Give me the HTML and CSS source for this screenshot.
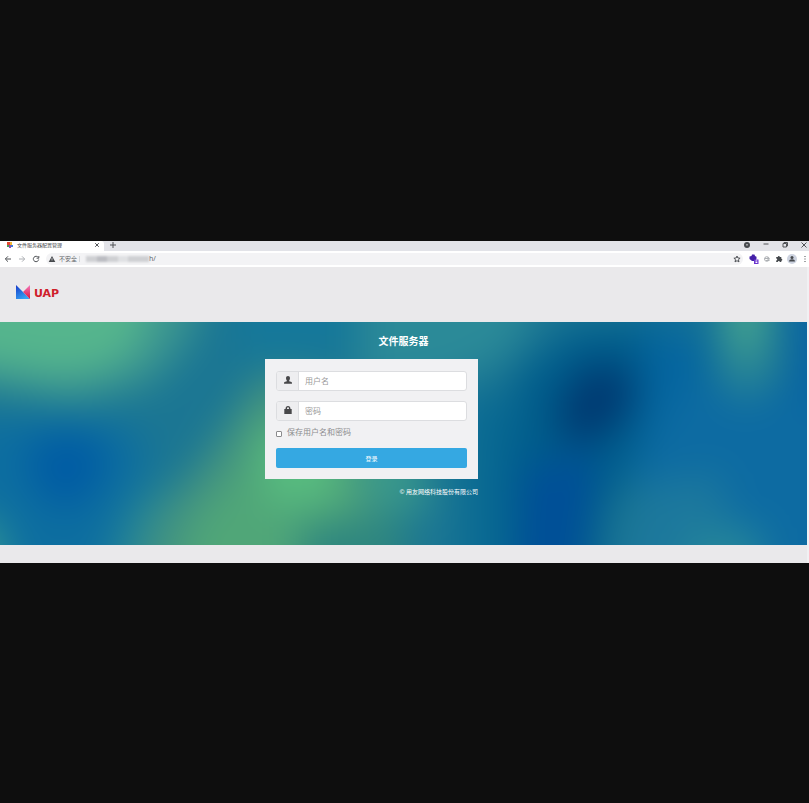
FILE: index.html
```html
<!DOCTYPE html>
<html>
<head>
<meta charset="utf-8">
<title>文件服务器配置管理</title>
<link rel="stylesheet" href="styles.css">
</head>
<body>
<div class="browser">
  <div class="tabs">
    <div class="tab">
      <svg class="favicon" viewBox="0 0 6 6"><path fill="#e5482f" d="M0 0h3v3H0z"/><path fill="#f2b632" d="M3 0h2v3H3z"/><path fill="#4b9c58" d="M0 3h2v2H0z"/><path fill="#8b4bb0" d="M2 3h2v3H2z"/><path fill="#3f7fd9" d="M4 3h2v2H4z"/></svg>
      <span class="tab-title">文件服务器配置管理</span>
      <button class="tool" aria-label="关闭标签页"><svg viewBox="0 0 8 8"><path d="M2.200 2.200l3.600 3.600M5.800 2.200L2.200 5.800"/></svg></button>
    </div>
    <button class="tool" aria-label="新标签页"><svg viewBox="0 0 8 8"><path d="M4 1v6M1 4h6"/></svg></button>
    <div class="window-tools">
      <button class="tool" aria-label="搜索标签页"><svg viewBox="0 0 8 8"><circle cx="4" cy="4" r="3" class="solid"/><path class="light" d="M2.800 3.500L4 4.800l1.200-1.300z"/></svg></button>
      <button class="tool" aria-label="最小化"><svg viewBox="0 0 8 8"><path d="M1.500 3h5"/></svg></button>
      <button class="tool" aria-label="还原"><svg viewBox="0 0 8 8"><path d="M2 2.500h3.500V6H2zM3 2.500V1.500h3.500V5H5.500"/></svg></button>
      <button class="tool" aria-label="关闭"><svg viewBox="0 0 8 8"><path d="M1.500 1.500l5 5M6.500 1.500l-5 5"/></svg></button>
    </div>
  </div>
  <div class="toolbar">
    <button class="tool" aria-label="后退"><svg viewBox="0 0 8 8"><path d="M7 4H1.500M4 1.300L1.300 4 4 6.700"/></svg></button>
    <button class="tool pale" aria-label="前进"><svg viewBox="0 0 8 8"><path d="M1 4h5.500M4 1.300L6.700 4 4 6.700"/></svg></button>
    <button class="tool" aria-label="刷新"><svg viewBox="0 0 8 8"><path d="M6.300 2.500A2.700 2.700 0 1 0 6.700 4.500M6.800 1v2.200H4.600"/></svg></button>
    <div class="address">
      <svg class="warning" viewBox="0 0 8 8"><path class="solid" d="M4 1l3.300 6H.7z"/><path class="light" d="M3.700 3h.6v2h-.6zM3.700 5.500h.6v.6h-.6z"/></svg>
      <span class="insecure">不安全</span>
      <span class="divider"></span>
      <span class="masked"><i></i><i></i><i></i><i></i><i></i><i></i></span>
      <span class="path">h/</span>
      <button class="tool star" aria-label="收藏"><svg viewBox="0 0 8 8"><path d="M4 1l.9 2 2.200.2-1.700 1.500.6 2.200L4 5.700 2 6.900l.6-2.200L.9 3.200 3.100 3z"/></svg></button>
    </div>
    <div class="extensions">
      <button class="tool ext" aria-label="扩展"><svg viewBox="0 0 10 10"><path fill="#4420a8" d="M3 .5h2.500l.5 1.500 1.500.8v2L6 7H3L.500 5V2.500L2.500 2z"/><path fill="#6b35cf" d="M5 5.500h4.500V10H5z"/><path stroke="#fff" d="M6.500 7h1.800M6.500 8.500h1.800"/></svg></button>
      <button class="tool pale" aria-label="扩展"><svg viewBox="0 0 8 8"><circle cx="3.800" cy="4" r="2.300"/><path d="M2 3.500h4.500M3 5.500h3.500M5 2v4"/></svg></button>
      <button class="tool" aria-label="扩展程序"><svg viewBox="0 0 8 8"><path class="solid" d="M1.200 2h1.600a1 1 0 0 1 2 0h1.500v1.700a1 1 0 0 1 0 2V7H4.800a1 1 0 0 0-2 0H1.200V5.400a1 1 0 0 0 0-2z"/></svg></button>
      <button class="tool ext" aria-label="用户"><svg viewBox="0 0 10 10"><circle cx="5" cy="5" r="5" fill="#cdd3e0"/><circle class="solid" cx="5" cy="3.400" r="1.500"/><path class="solid" d="M2 7.500c0-3 6-3 6 0z"/></svg></button>
      <button class="tool" aria-label="菜单"><svg viewBox="0 0 8 8"><path class="solid" d="M3.500 1h1v1h-1zM3.500 3.500h1v1h-1zM3.500 6h1v1h-1z"/></svg></button>
    </div>
  </div>
  <div class="page">
    <header class="brand">
      <svg class="mark" viewBox="0 0 14 14" aria-hidden="true">
        <defs>
          <linearGradient id="blue" x1="0" y1="0" x2=".6" y2="1"><stop offset="0" stop-color="#1638c8"/><stop offset="1" stop-color="#36a5f5"/></linearGradient>
          <linearGradient id="pink" x1="0" y1="0" x2="0" y2="1"><stop offset="0" stop-color="#f47ac0"/><stop offset="1" stop-color="#dc1238"/></linearGradient>
        </defs>
        <path fill="url(#blue)" d="M0 0l14 14H0z"/><path fill="url(#pink)" d="M14 0v14L7 7z"/>
      </svg>
      <span class="wordmark">UAP</span>
    </header>
    <main class="hero">
      <svg class="backdrop" viewBox="0 0 807 223" preserveAspectRatio="none" aria-hidden="true">
        <defs>
          <filter id="soft" filterUnits="userSpaceOnUse" x="-90" y="-90" width="990" height="400" color-interpolation-filters="sRGB"><feGaussianBlur stdDeviation="19"/></filter>
        </defs>
        <g filter="url(#soft)">
          <path fill="#1b7693" d="M-90-90H900V320H-90z"/>
          <path fill="#3b9590" d="M-90-90H220L190 20 150 62 75 82-90 52z"/>
          <path fill="#55b58d" d="M-90-90H165L140 25 105 48 60 55-90 30z"/>
          <path fill="#0d6ea0" d="M-90 100L70 92 135 105 150 145 120 200 90 320H20L0 200-90 165z"/>
          <path fill="#005ca4" d="M25 130L50 110 95 112 110 140 90 175 65 190 35 170z"/>
          <path fill="#2f9494" d="M-90 185L0 200 25 320H-90z"/>
          <path fill="#258596" d="M120 200L165 150 160 320H85z"/>
          <path fill="#429281" d="M130 320L150 200 200 140 262 50 330 60 400 150 390 320z"/>
          <path fill="#50a678" d="M165 320L190 200 235 150 262 90 340 100 362 170 320 320z"/>
          <path fill="#58bd80" d="M260 110L330 115 335 175 270 185z"/>
          <path fill="#2e867f" d="M300 205L400 190 420 320H300z"/>
          <path fill="#15789a" d="M230-90H350V40H240z"/>
          <path fill="#2b8a98" d="M360-90H555L515 28 450 60 360 70z"/>
          <path fill="#39988c" d="M355 100L415 110 430 190 370 185z"/>
          <path fill="#096a93" d="M462 75L505 70 520 320H460z"/>
          <path fill="#005d8c" d="M515 50L575 5 660 0 690 50 650 120 605 190 590 320H512L505 160z"/>
          <path fill="#0465a0" d="M650-90H710V90L640 150z"/>
          <path fill="#003a72" d="M560 75L590 40 635 50 630 90 595 120 560 118z"/>
          <path fill="#004f98" d="M525 145L595 130 590 180 570 320H510z"/>
          <path fill="#0d6ba2" d="M690 60H900V320H690L630 140z"/>
          <path fill="#1c789d" d="M650 160L720 150 750 320H600z"/>
          <path fill="#25869a" d="M690 210L760 205 770 320H670z"/>
          <path fill="#137096" d="M640-90H720V15H660z"/>
          <path fill="#288596" d="M715-90H780L772 60 745 82 720 55z"/>
          <path fill="#46a58f" d="M727-90H764V20L745 35 727 20z"/>
          <path fill="#0864a2" d="M785-90H900V80H790z"/>
        </g>
      </svg>
      <h1>文件服务器</h1>
      <div class="columns">
        <div class="login">
          <form class="panel">
            <div class="field">
              <label for="user" aria-label="用户名"><svg viewBox="0 0 8 8"><path d="M2 2.300C2 .9 2.800 0 4 0s2 .9 2 2.300c0 1-.4 1.700-.8 2.200v.7l2.300.9q.5.300.5 1.700H0q0-1.400.5-1.700l2.300-.9v-.7C2.400 4 2 3.300 2 2.300z"/></svg></label>
              <input id="user" type="text" placeholder="用户名">
            </div>
            <div class="field">
              <label for="password" aria-label="密码"><svg viewBox="0 0 8 8"><path fill-rule="evenodd" d="M.300 3h1.200C1.500 1 2.500 0 4 0s2.500 1 2.500 3h1.200v5H.300zM3 3h2c0-1.200-.3-1.800-1-1.800S3 1.800 3 3z"/></svg></label>
              <input id="password" type="password" placeholder="密码">
            </div>
            <div class="remember">
              <input id="remember" type="checkbox">
              <label for="remember">保存用户名和密码</label>
            </div>
            <button class="submit" type="submit">登录</button>
          </form>
          <p class="copyright">© 用友网络科技股份有限公司</p>
        </div>
      </div>
    </main>
    <footer class="bottom"></footer>
  </div>
</div>
</body>
</html>
```
FILE: styles.css
```css
* {
  box-sizing: border-box;
}

body {
  margin: 0;
  min-height: 100vh;
  padding: 241px 0 240px;
  background: #0e0e0e;
  font-family: "Noto Sans", "Noto Sans CJK SC", sans-serif;
}

button {
  padding: 0;
  border: 0;
  background: none;
  font-family: inherit;
}

.browser {
  overflow: hidden;
  background: #fff;
}

.tabs {
  display: flex;
  align-items: flex-start;
  gap: 5px;
  height: 10px;
  background: #e2e3e8;
}

.tab {
  display: flex;
  align-items: flex-start;
  gap: 4px;
  width: 104px;
  height: 10px;
  padding: 0 3px 0 7px;
  border-radius: 0 3px 0 0;
  background: #fff;
}

.favicon {
  width: 6px;
  height: 6px;
  margin-top: 1px;
}

.tab-title {
  flex: 1;
  color: #45474a;
  font-size: 5px;
  line-height: 8px;
  white-space: nowrap;
}

.tool {
  display: block;
  flex: none;
  width: 8px;
  height: 8px;
}

.tool svg {
  display: block;
  width: 100%;
  height: 100%;
  fill: none;
  stroke: #505357;
}

.tool.pale svg {
  stroke: #adb0b4;
}

.tool.ext {
  width: 10px;
  height: 10px;
}

.tool.ext svg {
  stroke: none;
}

.solid {
  fill: #45484c;
  stroke: none;
}

.light {
  fill: #fff;
  stroke: none;
}

.window-tools {
  display: flex;
  gap: 11px;
  margin-left: auto;
  padding-right: 1px;
}

.toolbar {
  display: flex;
  align-items: center;
  gap: 6px;
  height: 16px;
  padding: 0 0 0 4px;
}

.address {
  display: flex;
  flex: 1;
  align-items: center;
  height: 12px;
  padding: 0 2px;
  border-radius: 6px;
  background: #f3f3f5;
  color: #606367;
}

.warning {
  width: 8px;
  height: 8px;
  margin-right: 3px;
}

.insecure {
  font-size: 6px;
  line-height: 10px;
}

.divider {
  width: 1px;
  height: 6px;
  margin: 0 6px 0 2px;
  background: #d5d7da;
}

.masked {
  display: flex;
  width: 63px;
  height: 6px;
  filter: blur(1px);
}

.masked i {
  flex: 1;
  background: #cfd0d3;
}

.masked i:nth-child(2) {
  background: #bcbdc2;
}

.masked i:nth-child(4) {
  background: #e0e1e3;
}

.path {
  font-size: 7px;
  line-height: 10px;
}

.star {
  margin-left: auto;
}

.extensions {
  display: flex;
  align-items: center;
  gap: 4px;
}

.page {
  border-right: 2px solid #f1f1f3;
  background: #eae9eb;
}

.brand {
  display: flex;
  align-items: center;
  gap: 4px;
  height: 55px;
  padding: 0 16px 5px;
}

.mark {
  width: 14px;
  height: 14px;
}

.wordmark {
  margin-top: 4px;
  color: #cf202b;
  font-family: "DejaVu Sans", sans-serif;
  font-size: 11px;
  font-weight: 700;
  line-height: 12px;
}

.hero {
  position: relative;
  isolation: isolate;
  overflow: hidden;
  padding: 10px 0 48px;
}

.backdrop {
  position: absolute;
  inset: 0;
  z-index: -1;
  width: 100%;
  height: 100%;
}

h1 {
  margin: 0 0 9px;
  color: #fff;
  font-size: 10px;
  line-height: 18px;
  text-align: center;
}

.columns {
  display: grid;
  grid-template-columns: 265fr minmax(213px, 213fr) 329fr;
}

.login {
  grid-column: 2;
}

.panel {
  padding: 12px 11px 11px;
  background: #f1f1f3;
}

.field {
  display: flex;
  height: 20px;
  margin-bottom: 10px;
  border: 1px solid #dcdde0;
  border-radius: 3px;
  background: #fff;
  overflow: hidden;
}

.field label {
  display: grid;
  place-items: center;
  width: 22px;
  padding-bottom: 2px;
  border-right: 1px solid #dcdde0;
  background: #eeeef0;
}

.field svg {
  width: 8px;
  height: 8px;
  fill: #48484a;
}

.field input {
  flex: 1;
  min-width: 0;
  padding: 0 6px 1px;
  border: 0;
  background: none;
  font-family: inherit;
  font-size: 8px;
}

.field input::placeholder {
  color: #999;
}

.remember {
  display: flex;
  align-items: center;
  gap: 5px;
  height: 12px;
  margin: -5px 0 10px;
  color: #8c8c8e;
  font-size: 8px;
  line-height: 12px;
}

.remember input {
  appearance: none;
  width: 6px;
  height: 6px;
  margin: 4px 0 0;
  border: 1px solid #8b8b8d;
  border-radius: 1px;
  background: #fff;
}

.submit {
  display: block;
  width: 100%;
  height: 20px;
  border-radius: 2px;
  background: #35a8e2;
  color: #fff;
  font-size: 6px;
}

.copyright {
  margin: 8px 0 0;
  color: #fff;
  font-size: 6px;
  line-height: 10px;
  text-align: right;
  white-space: nowrap;
}

.bottom {
  height: 18px;
}
```
